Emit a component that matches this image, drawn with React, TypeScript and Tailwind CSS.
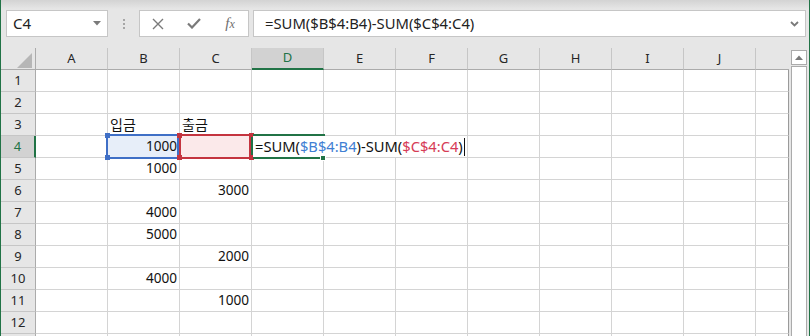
import React from 'react';

const COLS = ['A', 'B', 'C', 'D', 'E', 'F', 'G', 'H', 'I', 'J'];
const ROWS = [1, 2, 3, 4, 5, 6, 7, 8, 9, 10, 11, 12, 13];

const DATA: Record<number, Record<string, string>> = {
  3: { B: '입금', C: '출금' },
  4: { B: '1000' },
  5: { B: '1000' },
  6: { C: '3000' },
  7: { B: '4000' },
  8: { B: '5000' },
  9: { C: '2000' },
  10: { B: '4000' },
  11: { C: '1000' },
};

function isNum(v: string) {
  return /^\d+$/.test(v);
}

function Cell({ col, row }: { col: string; row: number }) {
  const v = DATA[row]?.[col] ?? '';
  const num = isNum(v);
  let bg = 'bg-white';
  if (row === 4 && col === 'B') bg = 'bg-[#e7eef9]';
  if (row === 4 && col === 'C') bg = 'bg-[#fbe9ea]';
  return (
    <div
      className={`w-[72px] shrink-0 border-r border-b border-[#d4d4d4] flex items-center px-[2px] overflow-visible whitespace-nowrap ${bg} ${
        num ? 'justify-end text-[13.6px] text-[#111]' : 'justify-start text-[14px] text-[#111]'
      }`}
    >
      {v}
    </div>
  );
}

function Square({ className }: { className: string }) {
  return <div className={`absolute w-[5px] h-[5px] ${className}`} />;
}

export default function App() {
  return (
    <div className="relative w-[810px] h-[336px] overflow-hidden bg-[#e6e6e6] border-x border-[#217346] font-['Noto_Sans','Noto_Sans_CJK_KR',sans-serif] text-[#222]">
      {/* Formula bar */}
      <div className="h-[48px] flex items-start pt-[10px] pl-[5px] bg-[linear-gradient(to_bottom,#d3d3d3,#e6e6e6_9px)]">
        <div className="w-[102px] h-[27px] bg-white border border-[#c6c6c6] flex items-center justify-between pl-[6px] pr-[6px]">
          <span className="text-[15px] leading-none text-[#222]">C4</span>
          <svg width="8" height="5" viewBox="0 0 8 5">
            <path d="M0 0H8L4 4.5Z" fill="#7a7a7a" />
          </svg>
        </div>
        <div className="w-[31px] h-[27px] flex flex-col items-center justify-center gap-[2px]">
          <div className="w-[2px] h-[2px] bg-[#a6a6a6]" />
          <div className="w-[2px] h-[2px] bg-[#a6a6a6]" />
          <div className="w-[2px] h-[2px] bg-[#a6a6a6]" />
        </div>
        <div className="w-[110px] h-[27px] bg-white border border-[#c6c6c6] flex items-center">
          <div className="w-[36px] flex justify-center">
            <svg width="12" height="12" viewBox="0 0 12 12">
              <path d="M1 1L11 11M11 1L1 11" stroke="#7a7a7a" strokeWidth="1.4" />
            </svg>
          </div>
          <div className="w-[36px] flex justify-center">
            <svg width="14" height="11" viewBox="0 0 14 11">
              <path d="M1 5.5L5 9.5L13 1" stroke="#7a7a7a" strokeWidth="2.2" fill="none" />
            </svg>
          </div>
          <div className="w-[36px] flex justify-center">
            <span className="font-['Liberation_Serif',serif] italic text-[15px] leading-none text-[#6e6e6e]">
              f<span className="text-[12px]">x</span>
            </span>
          </div>
        </div>
        <div className="ml-[4px] w-[553px] h-[27px] bg-white border border-[#c6c6c6] flex items-center justify-between pl-[11px] pr-[6px]">
          <span className="text-[14.8px] leading-none text-[#222] whitespace-nowrap">=SUM($B$4:B4)-SUM($C$4:C4)</span>
          <svg width="9" height="6" viewBox="0 0 9 6">
            <path d="M1 1L4.5 4.5L8 1" stroke="#7a7a7a" strokeWidth="1.8" fill="none" />
          </svg>
        </div>
      </div>

      {/* Sheet + scrollbar */}
      <div className="flex h-[288px]">
        <div className="relative w-[788px] shrink-0 flex flex-col">
          {/* column headers */}
          <div className="flex h-[22px] shrink-0">
            <div className="relative w-[35px] shrink-0 border-r border-b border-[#ababab]">
              <svg className="absolute left-[16px] top-[5px]" width="16" height="15" viewBox="0 0 16 15">
                <path d="M15 0V15H0Z" fill="#b6b6b6" />
              </svg>
            </div>
            {COLS.map((c) => (
              <div
                key={c}
                className={
                  c === 'D'
                    ? 'w-[72px] shrink-0 flex items-center justify-center text-[13px] bg-[#d2d2d2] border-r border-r-[#c6c6c6] border-b-2 border-b-[#217346] text-[#217346]'
                    : 'w-[72px] shrink-0 flex items-center justify-center text-[13px] border-r border-r-[#c6c6c6] border-b border-b-[#ababab] text-[#262626]'
                }
              >
                {c}
              </div>
            ))}
            <div className="w-[33px] shrink-0 border-b border-b-[#ababab]" />
          </div>

          {/* rows */}
          {ROWS.map((r) => (
            <div key={r} className="flex h-[22px] shrink-0">
              <div
                className={
                  r === 4
                    ? 'w-[35px] shrink-0 flex items-center justify-center text-[13px] bg-[#d2d2d2] border-b border-b-[#c6c6c6] border-r-2 border-r-[#217346] text-[#217346]'
                    : 'w-[35px] shrink-0 flex items-center justify-center text-[13px] bg-[#e6e6e6] border-b border-b-[#c6c6c6] border-r border-r-[#ababab] text-[#262626]'
                }
              >
                {r < 13 ? r : ''}
              </div>
              {COLS.map((c) => (
                <Cell key={c} col={c} row={r} />
              ))}
              <div className="w-[33px] shrink-0 bg-white border-b border-b-[#d4d4d4] border-r border-r-[#9a9a9a]" />
            </div>
          ))}

          {/* Blue range B4 */}
          <div className="absolute left-[105px] top-[86px] w-[73px] h-[25px] border-2 border-[#3f6fc6]" />
          <Square className="left-[104px] top-[85px] bg-[#3f6fc6]" />
          <Square className="left-[104px] top-[107px] bg-[#3f6fc6]" />
          {/* Red range C4 */}
          <div className="absolute left-[178px] top-[86px] w-[72px] h-[25px] border-2 border-[#c4343f]" />
          <Square className="left-[176px] top-[85px] bg-[#c4343f]" />
          <Square className="left-[176px] top-[107px] bg-[#c4343f]" />
          <Square className="left-[248px] top-[85px] bg-[#c4343f]" />
          <Square className="left-[248px] top-[107px] bg-[#c4343f]" />

          {/* Edit box in D4 */}
          <div className="absolute left-[252px] top-[88px] w-[214px] h-[21px] bg-white flex items-center pl-[2px] whitespace-nowrap text-[14.7px] text-[#111]">
            <span>=SUM(</span>
            <span className="text-[#3f7fd3]">$B$4:B4</span>
            <span>)-SUM(</span>
            <span className="text-[#d63b56]">$C$4:C4</span>
            <span>)</span>
            <span className="ml-[1px] w-[1px] h-[18px] bg-[#111]" />
          </div>
          {/* Green active border */}
          <div className="absolute left-[252px] top-[86px] w-[72px] h-[2px] bg-[#217346]" />
          <div className="absolute left-[252px] top-[109px] w-[68px] h-[2px] bg-[#217346]" />
          <div className="absolute left-[250px] top-[89px] w-[2px] h-[18px] bg-[#217346]" />
          <div className="absolute left-[319px] top-[107px] w-[6px] h-[6px] bg-[#217346] border border-white" />
        </div>

        {/* Scrollbar */}
        <div className="ml-[2px] mt-[2px] w-[16px] shrink-0 flex flex-col">
          <div className="h-[15px] shrink-0 bg-white border border-[#ababab] flex items-center justify-center">
            <svg width="8" height="5" viewBox="0 0 8 5">
              <path d="M0 5H8L4 0.5Z" fill="#7a7a7a" />
            </svg>
          </div>
          <div className="flex-1 bg-white border-x border-[#ababab] mt-[1px] border-t" />
        </div>
      </div>
    </div>
  );
}
